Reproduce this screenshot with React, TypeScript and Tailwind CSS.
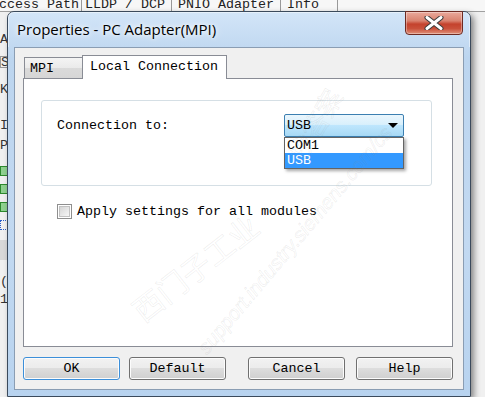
export default function App() {
  const btn =
    "flex h-[23px] w-[97px] items-center justify-center rounded-[3px] border border-[#707070] bg-[linear-gradient(#f2f2f2_0%,#ebebeb_50%,#dddddd_50%,#cfcfcf_100%)] shadow-[inset_0_0_0_1px_#fcfcfc]";

  return (
    <div className="relative h-[397px] w-[485px] overflow-hidden bg-[#f0f0f0] font-['Liberation_Mono',monospace] text-[13.33px] text-black">
      {/* app behind the dialog: tab strip */}
      <div className="flex h-[12px] overflow-hidden border-b border-[#a0a0a0] bg-[#f7f7f7] leading-[15px] text-[#222]">
        <div className="-mt-[3px] ml-[-13px] w-[95px] shrink-0 whitespace-nowrap border-r border-[#999] pl-[4px]">Access Path</div>
        <div className="-mt-[3px] w-[90px] shrink-0 whitespace-nowrap border-r border-[#999] pl-[3px]">LLDP / DCP</div>
        <div className="-mt-[3px] w-[109px] shrink-0 whitespace-nowrap border-r border-[#999] pl-[6px]">PNIO Adapter</div>
        <div className="-mt-[3px] w-[57px] shrink-0 whitespace-nowrap border-r border-[#999] pl-[6px]">Info</div>
      </div>

      {/* app behind the dialog: left column */}
      <div className="flex w-[7px] flex-col overflow-hidden leading-[12px] text-[#333]">
        <div className="mt-[22px] whitespace-nowrap">A:</div>
        <div className="mt-[10px] h-[12px] w-[20px] border border-[#999] whitespace-nowrap">S</div>
        <div className="mt-[16px] whitespace-nowrap">K(</div>
        <div className="mt-[24px] whitespace-nowrap">In</div>
        <div className="mt-[8px] whitespace-nowrap">P</div>
        <div className="mt-[14px] h-[10px] w-[8px] border border-[#2d8a2d] bg-[#8fd18f]" />
        <div className="mt-[8px] h-[10px] w-[8px] border border-[#2d8a2d] bg-[#8fd18f]" />
        <div className="mt-[8px] h-[10px] w-[8px] border border-[#2d8a2d] bg-[#8fd18f]" />
        <div className="mt-[8px] h-[10px] w-[8px] border border-dotted border-[#2a5fc9]" />
        <div className="mt-[10px] h-[20px] w-[8px] bg-[#d8d8d8]" />
        <div className="mt-[16px] whitespace-nowrap">(:</div>
        <div className="mt-[6px] whitespace-nowrap">1</div>
      </div>

      {/* dialog window */}
      <div className="absolute left-[7px] top-[11px] flex h-[386px] w-[464px] flex-col rounded-t-[7px] border border-[#3b4a5c] bg-[linear-gradient(180deg,#d3e5f8_0%,#bcd5ef_12%,#c2d9f1_60%,#b8d3ef_100%)] shadow-[3px_3px_6px_rgba(0,0,0,0.45)]">
        {/* title bar */}
        <div className="relative h-[35px] shrink-0 rounded-t-[6px] border-t border-l border-r border-[#f4f9fe]/60">
          <div className="pl-[8px] pt-[7px] font-['Open_Sans',sans-serif] text-[15px] leading-[18px] text-black [text-shadow:0_0_8px_#ffffff,0_0_4px_#ffffff]">
            Properties - PC Adapter(MPI)
          </div>
          <div className="absolute right-[6px] top-[-2px] flex h-[24px] w-[58px] items-center justify-center rounded-b-[4px] border border-[#6e2a22] bg-[linear-gradient(180deg,#eaa99b_0%,#d9826f_40%,#c4422d_55%,#c9503a_75%,#e0917a_100%)] shadow-[inset_0_0_0_1px_rgba(255,255,255,0.35)]">
            <svg width="24" height="14" viewBox="0 0 24 14">
              <path d="M5 1.5 L19 12.5 M19 1.5 L5 12.5" stroke="#3a3a3a" strokeWidth="5" strokeLinecap="round" />
              <path d="M5 1.5 L19 12.5 M19 1.5 L5 12.5" stroke="#ffffff" strokeWidth="3" strokeLinecap="round" />
            </svg>
          </div>
        </div>

        {/* client area */}
        <div className="mx-[6px] flex h-[343px] flex-col border border-[#8a9db3] bg-[#f0f0f0]">
          {/* tabs */}
          <div className="ml-[9px] mt-[7px] flex h-[23px] items-end">
            <div className="flex h-[21px] w-[59px] items-center border border-b-0 border-[#898c95] bg-[linear-gradient(#f4f4f4_0%,#eaeaea_50%,#dadada_50%,#d6d6d6_100%)] pl-[5px] pt-[2px] leading-none">
              MPI
            </div>
            <div className="relative z-10 -mb-[1px] -ml-[1px] flex h-[24px] w-[145px] items-center border border-b-0 border-[#898c95] bg-white pb-[1px] pl-[7px] leading-none">
              Local Connection
            </div>
          </div>

          {/* tab page */}
          <div className="ml-[8px] flex h-[269px] w-[430px] flex-col border border-[#898c95] bg-white">
            <div className="ml-[17px] mt-[21px] h-[86px] w-[391px] rounded-[3px] border border-[#d5dfe5]">
              <div className="mt-[13px] flex items-center pl-[15px]">
                <div className="w-[227px] leading-none">Connection to:</div>
                <div className="relative">
                  <div className="flex h-[23px] w-[120px] items-center justify-between rounded-[2px] border border-[#3c7fb1] bg-[linear-gradient(180deg,#eaf6fd_0%,#d9f0fc_45%,#bee6fd_50%,#a7d9f5_100%)] pl-[2px] pr-[5px] leading-none">
                    <span>USB</span>
                    <svg width="10" height="5" viewBox="0 0 10 5">
                      <path d="M0 0 H10 L5 5 Z" fill="#000" />
                    </svg>
                  </div>
                  <div className="absolute left-0 top-[23px] z-20 flex w-[120px] flex-col border border-[#646464] bg-white shadow-[2px_2px_3px_rgba(0,0,0,0.35)] leading-[15px]">
                    <div className="h-[15px] pl-[2px]">COM1</div>
                    <div className="h-[15px] bg-[#3399ff] pl-[2px] text-white">USB</div>
                  </div>
                </div>
              </div>
            </div>

            <div className="ml-[33px] mt-[18px] flex items-center">
              <div className="flex h-[15px] w-[15px] items-center justify-center border border-[#8f8f8f] bg-white">
                <div className="h-[11px] w-[11px] border border-[#c2c2c2] bg-[linear-gradient(135deg,#d6d6d6_0%,#f6f6f6_100%)]" />
              </div>
              <div className="ml-[5px] leading-none">Apply settings for all modules</div>
            </div>
          </div>

          {/* buttons */}
          <div className="ml-[8px] mt-[10px] flex">
            <div className={btn.replace("border-[#707070]", "border-[#3c8fd9]") + " shadow-[inset_0_0_0_1px_#bfe6fb]"}>OK</div>
            <div className={btn + " ml-[9px]"}>Default</div>
            <div className={btn + " ml-[22px]"}>Cancel</div>
            <div className={btn + " ml-[11px]"}>Help</div>
          </div>
        </div>
      </div>

      {/* watermark */}
      <div className="pointer-events-none absolute left-[120px] top-[245px] z-30 -rotate-[38deg] whitespace-nowrap font-['Noto_Sans_CJK_SC',sans-serif] text-[30px] text-transparent [-webkit-text-stroke:0.6px_rgba(140,140,140,0.16)]">
        西门子工业
      </div>
      <div className="pointer-events-none absolute left-[150px] top-[225px] z-30 -rotate-[50deg] whitespace-nowrap font-['Liberation_Sans',sans-serif] text-[20px] italic text-transparent [-webkit-text-stroke:0.6px_rgba(140,140,140,0.16)]">
        support.industry.siemens.com/cs
      </div>
      <div className="pointer-events-none absolute left-[275px] top-[105px] z-30 -rotate-[60deg] whitespace-nowrap font-['Noto_Sans_CJK_SC',sans-serif] text-[26px] text-transparent [-webkit-text-stroke:0.6px_rgba(140,140,140,0.16)]">
        找答案
      </div>
    </div>
  );
}
